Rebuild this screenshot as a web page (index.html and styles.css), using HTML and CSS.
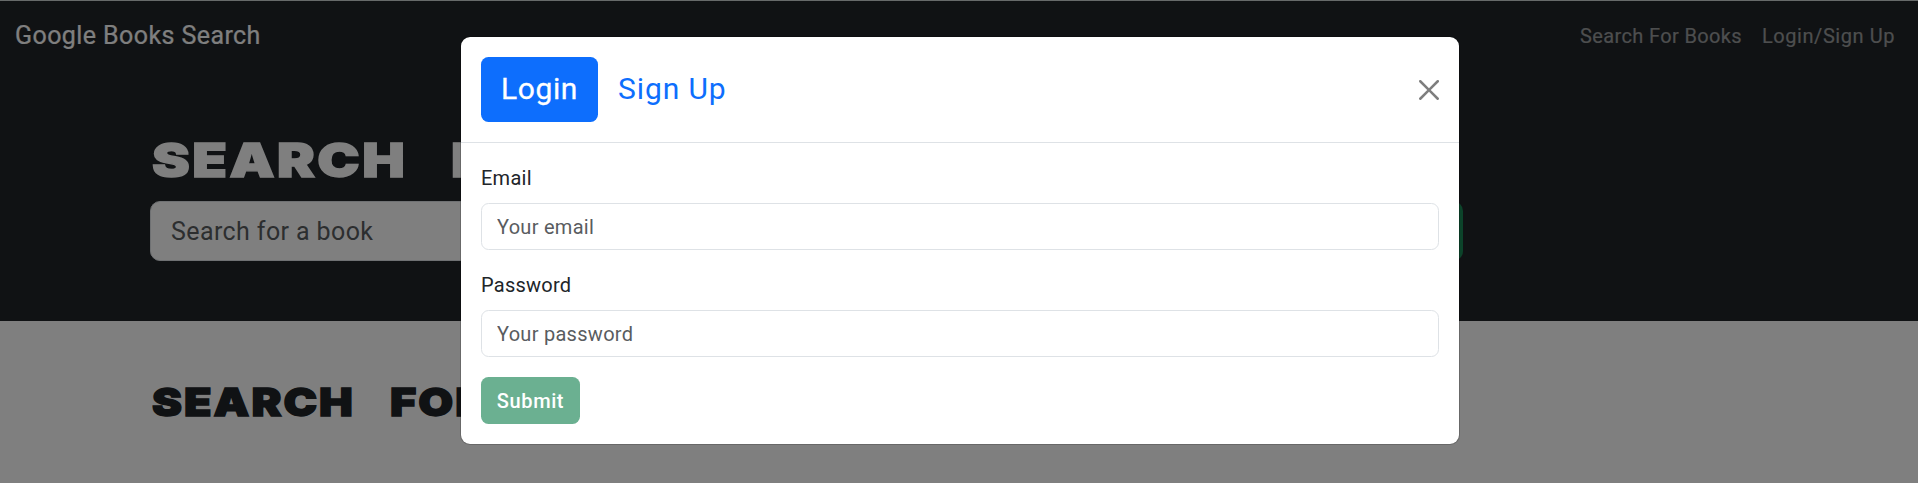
FILE: index.html
```html
<!DOCTYPE html>
<html lang="en">
<head>
<meta charset="utf-8">
<title>Google Books Search</title>
<link rel="stylesheet" href="styles.css">
</head>
<body>
<div class="page">
  <nav class="navbar">
    <a class="brand">Google Books Search</a>
    <div class="links"><a class="link-search">Search For Books</a><a class="link-login">Login/Sign Up</a></div>
  </nav>
  <header class="hero">
    <div class="container">
      <h1><span>SEARCH</span><span>FOR</span></h1>
      <form class="search">
        <input type="text" placeholder="Search for a book">
        <button type="button" aria-label="Submit Search"></button>
      </form>
    </div>
  </header>
  <main class="container">
    <h2><span>SEARCH</span><span>FOR</span></h2>
  </main>
</div>
<div class="backdrop">
  <section class="modal" role="dialog">
    <div class="modal-header">
      <div class="pills"><a class="pill active">Login</a><a class="pill signup">Sign Up</a></div>
      <svg class="close" viewBox="0 0 16 16"><path d="M.293.293a1 1 0 0 1 1.414 0L8 6.586 14.293.293a1 1 0 1 1 1.414 1.414L9.414 8l6.293 6.293a1 1 0 0 1-1.414 1.414L8 9.414l-6.293 6.293a1 1 0 0 1-1.414-1.414L6.586 8 .293 1.707a1 1 0 0 1 0-1.414z"/></svg>
    </div>
    <form class="modal-body">
      <label>Email</label>
      <input type="text" placeholder="Your email">
      <label>Password</label>
      <input type="text" placeholder="Your password">
      <button class="submit" type="button">Submit</button>
    </form>
  </section>
</div>
</body>
</html>
```
FILE: styles.css
```css
* { box-sizing: border-box; }
body { margin: 0; height: 483px; overflow: hidden; background: #fff; color: #212529; font: 400 20px/30px Roboto, "Open Sans", sans-serif; }
input, button { font: inherit; }
.page { width: 1920px; height: 483px; border-top: 1px solid #cfd4d4; }
.navbar { display: flex; justify-content: space-between; align-items: center; height: 70px; padding: 0 25px 0 15px; background: #212529; }
.brand { color: #fff; font-size: 25px; letter-spacing: .42px; -webkit-text-stroke: .2px currentColor; }
.links { display: flex; gap: 20px; color: #9b9d9e; -webkit-text-stroke: .2px currentColor; }
.link-search { letter-spacing: .36px; }
.link-login { letter-spacing: .56px; }
.hero { height: 250px; padding-top: 62px; background: #212529; }
.container { width: 1650px; margin: 0 auto; padding: 0 15px; }
h1, h2 { display: flex; margin: 0; font-family: Inter, sans-serif; font-weight: 900; }
h1 span, h2 span { display: block; transform-origin: left; -webkit-text-stroke: 1.4px currentColor; }
h1 { height: 68px; padding-left: 2px; color: #fff; font-size: 46.5px; line-height: 54px; letter-spacing: 2px; }
h1 span { width: 220px; margin-right: 79px; transform: scaleX(1.22); }
h2 { padding: 57px 0 0 2px; font-size: 38.5px; line-height: 48px; letter-spacing: 1.7px; }
h2 span { width: 185px; margin-right: 53px; transform: scaleX(1.17); }
.search { display: flex; gap: 30px; }
.search input { width: 1070px; height: 60px; padding: 0 20px; border: 1px solid #dee2e6; border-radius: 10px; background: #fff; font-size: 25px; letter-spacing: .4px; }
.search button { width: 213px; height: 60px; border: 0; border-radius: 10px; background: #198754; }
input::placeholder { color: #595c5f; opacity: 1; }
.backdrop { position: absolute; inset: 0; padding: 36px 0 0 460px; background: rgba(0,0,0,.5); }
.modal { width: 1000px; border: 1px solid rgba(0,0,0,.175); border-radius: 10px; background: #fff; background-clip: padding-box; }
.modal-header { display: flex; justify-content: space-between; align-items: center; height: 106px; padding: 0 20px; border-bottom: 1px solid #dee2e6; }
.pills { display: flex; color: #0d6efd; font-size: 30px; }
.pill { height: 65px; padding: 0 20px; border-radius: 7.5px; line-height: 64px; letter-spacing: .9px; }
.active { width: 117px; background: #0d6efd; color: #fff; letter-spacing: .6px; -webkit-text-stroke: .3px #fff; }
.close { width: 20px; height: 20px; opacity: .5; }
.modal-body { display: flex; flex-direction: column; padding: 20px; letter-spacing: .25px; }
label { height: 30px; margin-bottom: 10px; }
.modal-body input { width: 100%; height: 47px; margin-bottom: 20px; padding: 0 15px; border: 1px solid #dee2e6; border-radius: 7.5px; letter-spacing: .28px; }
.submit { width: 99px; height: 47px; padding: 0; border: 0; border-radius: 7.5px; background: #6bb091; color: #fff; font-weight: 500; letter-spacing: .6px; }
```
